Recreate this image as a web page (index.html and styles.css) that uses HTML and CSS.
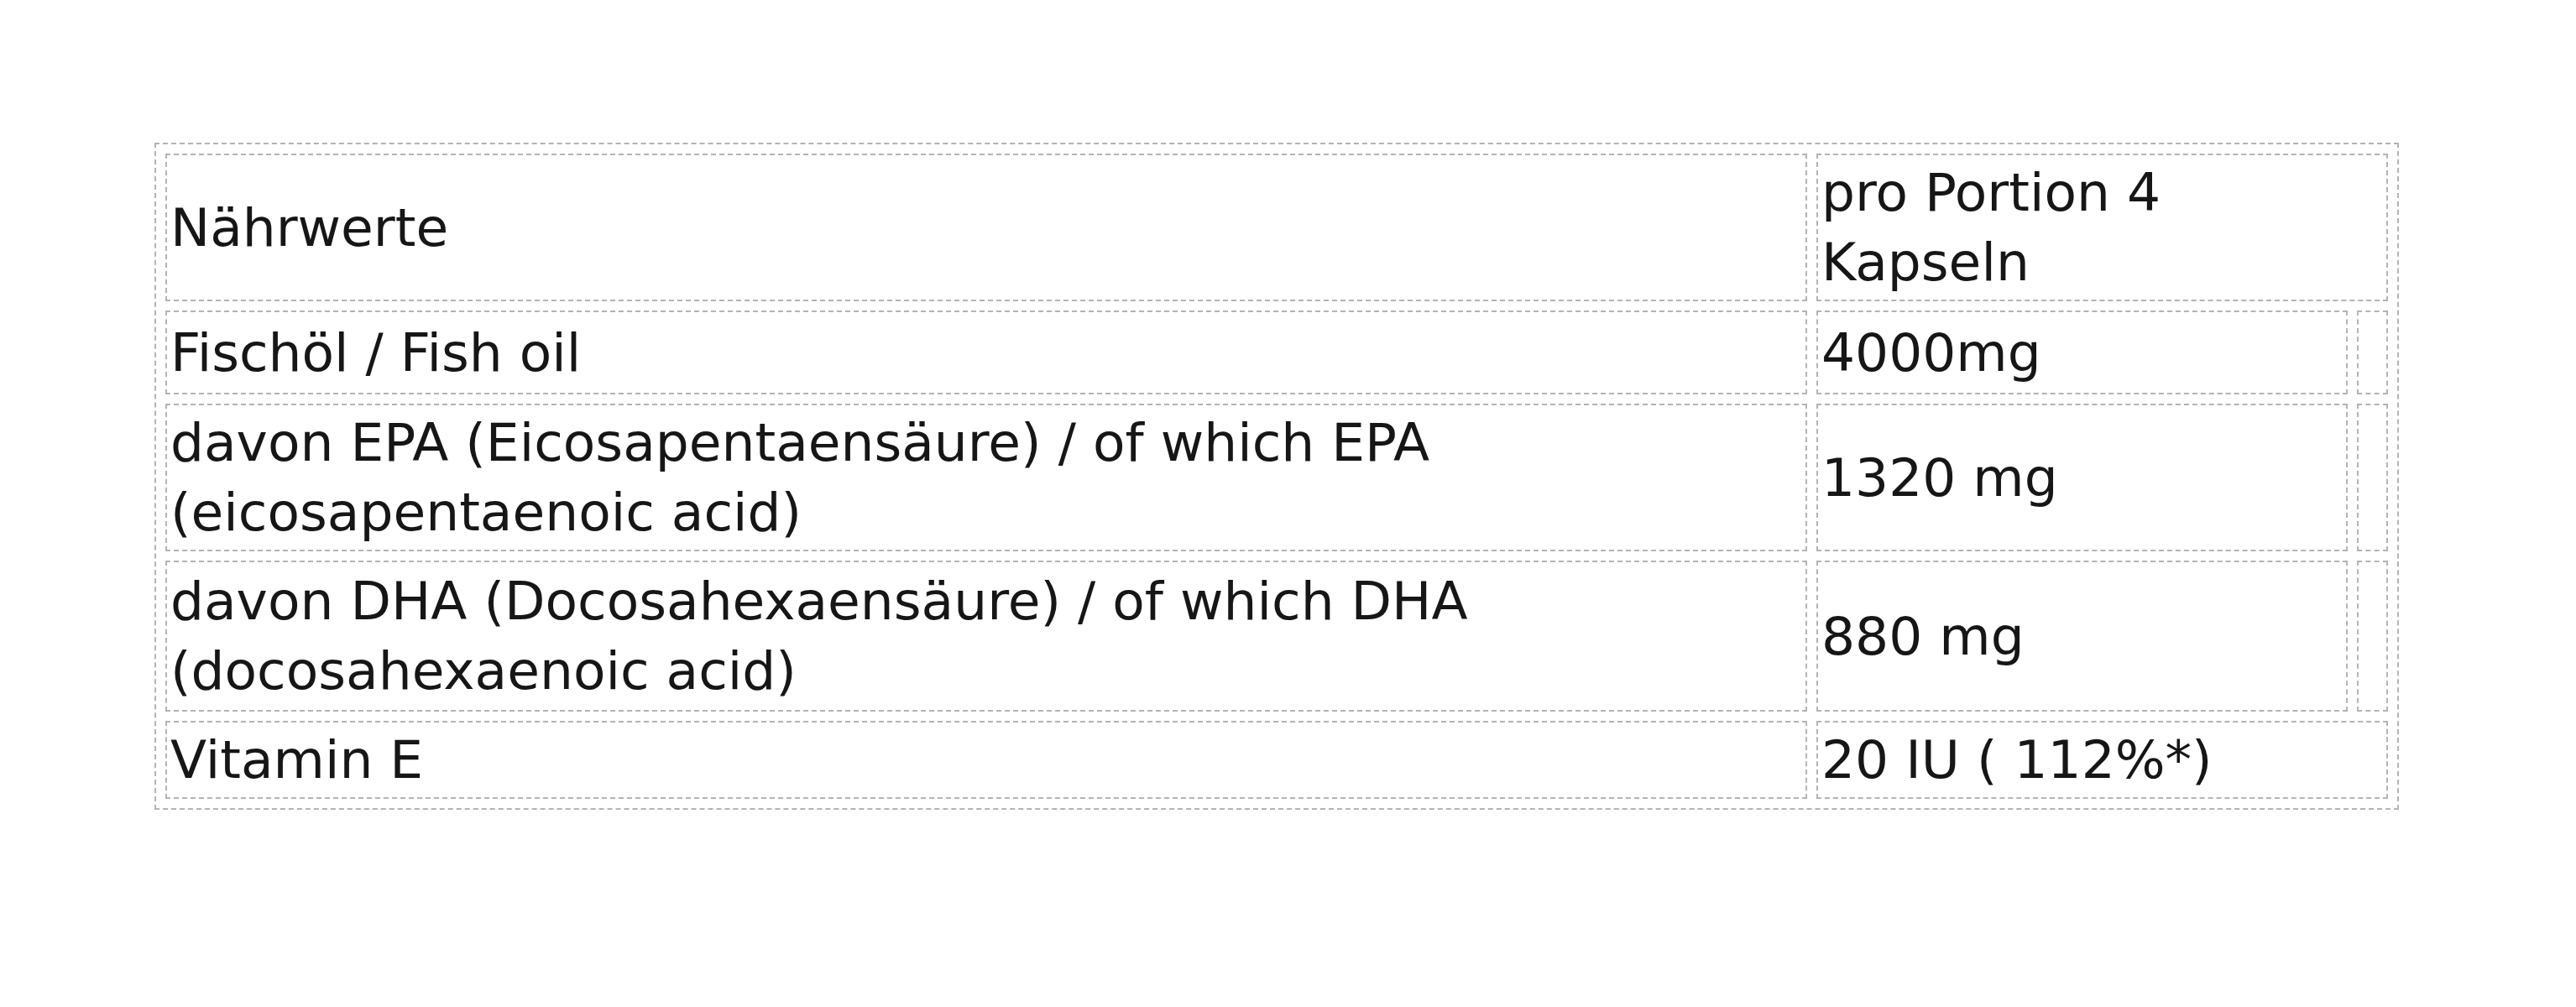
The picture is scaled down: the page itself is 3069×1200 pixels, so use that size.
FILE: index.html
```html
<!DOCTYPE html>
<html lang="de">
<head>
<meta charset="utf-8">
<title>Nährwerte</title>
<link rel="stylesheet" href="styles.css">
</head>
<body>
<table class="nutri">
  <colgroup>
    <col class="c1">
    <col class="c2">
    <col class="c3">
  </colgroup>
  <tr class="r1">
    <td>Nährwerte</td>
    <td colspan="2">pro Portion 4<br>Kapseln</td>
  </tr>
  <tr class="r2">
    <td>Fischöl / Fish oil</td>
    <td>4000mg</td>
    <td></td>
  </tr>
  <tr>
    <td>davon EPA (Eicosapentaensäure) / of which EPA<br>(eicosapentaenoic acid)</td>
    <td>1320 mg</td>
    <td></td>
  </tr>
  <tr class="r4">
    <td>davon DHA (Docosahexaensäure) / of which DHA<br>(docosahexaenoic acid)</td>
    <td>880 mg</td>
    <td></td>
  </tr>
  <tr class="r5">
    <td>Vitamin E</td>
    <td colspan="2">20 IU ( 112%*)</td>
  </tr>
</table>
</body>
</html>
```
FILE: styles.css
```css
html, body {
  margin: 0;
  padding: 0;
  background: #ffffff;
}

body {
  font-family: "DejaVu Sans", Verdana, sans-serif;
  color: #161616;
}

.nutri {
  margin: 170px 0 0 184px;
  width: 2674px;
  table-layout: fixed;
  border: 2px dashed #b4b4b4;
  border-spacing: 11px;
  border-collapse: separate;
  font-size: 63px;
  line-height: 83px;
}

.c1 { width: 1956px; }
.c2 { width: 633px; }
.c3 { width: 37px; }

.nutri td {
  border: 2px dashed #b4b4b4;
  padding: 3px 4px;
  vertical-align: middle;
  white-space: nowrap;
}

.r2 td {
  height: 90px;
}

.r4 td {
  padding-top: 5px;
  padding-bottom: 5px;
}

.r5 td {
  height: 83px;
}
```
